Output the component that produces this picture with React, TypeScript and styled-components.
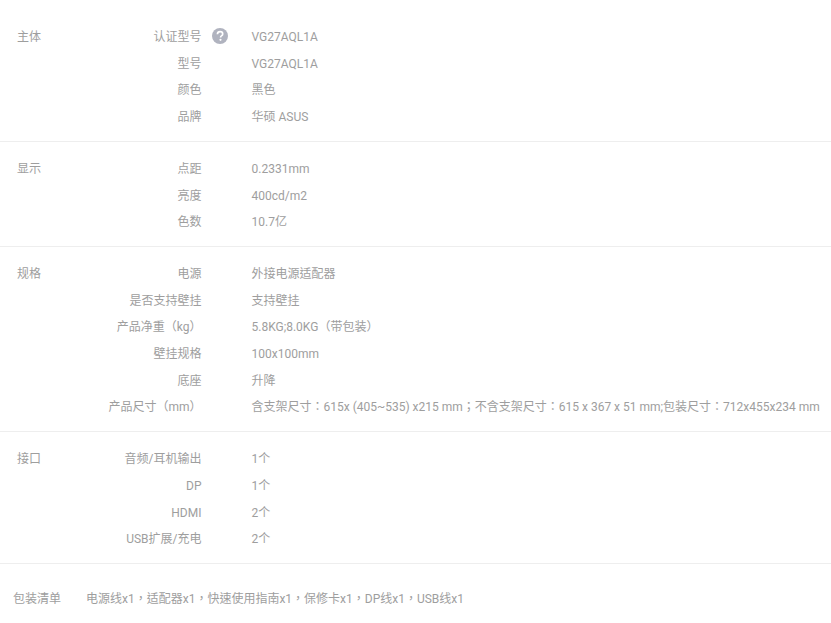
import React from 'react';
import styled, { createGlobalStyle } from 'styled-components';

const GlobalStyle = createGlobalStyle`
  html, body {
    margin: 0;
    padding: 0;
    background: #fff;
  }
`;

const Page = styled.div`
  width: 831px;
  padding-top: 10px;
  font-family: Roboto, "Noto Sans CJK TC", sans-serif;
  font-size: 12px;
  color: #9e9e9e;
  overflow: hidden;
`;

const Section = styled.section`
  display: flex;
  padding: 12.1px 0;
  border-bottom: 1px solid #eee;
`;

const SectionTitle = styled.div`
  width: 17px;
  flex: none;
  padding-left: 17px;
  white-space: nowrap;
  line-height: 30px;
`;

const Rows = styled.div`
  flex: 1;
  min-width: 0;
`;

const Row = styled.div`
  display: flex;
  height: 26.67px;
  line-height: 30px;
`;

const Label = styled.div`
  width: 167.5px;
  flex: none;
  text-align: right;
  white-space: nowrap;
`;

const Value = styled.div`
  margin-left: 50px;
  white-space: nowrap;
`;

const LabelWrap = styled.div`
  position: relative;
`;

const Help = styled.svg`
  position: absolute;
  left: 177.5px;
  top: 6px;
  width: 16px;
  height: 16px;
`;

const Packing = styled.div`
  display: flex;
  padding: 22px 0 0 13px;
  line-height: 26.67px;
  white-space: nowrap;
`;

const PackingLabel = styled.div`
  width: 73px;
  flex: none;
`;

type Spec = { label: string; value: string; help?: boolean };
type Group = { title: string; rows: Spec[] };

const groups: Group[] = [
  {
    title: '主体',
    rows: [
      { label: '认证型号', value: 'VG27AQL1A', help: true },
      { label: '型号', value: 'VG27AQL1A' },
      { label: '颜色', value: '黑色' },
      { label: '品牌', value: '华硕 ASUS' },
    ],
  },
  {
    title: '显示',
    rows: [
      { label: '点距', value: '0.2331mm' },
      { label: '亮度', value: '400cd/m2' },
      { label: '色数', value: '10.7亿' },
    ],
  },
  {
    title: '规格',
    rows: [
      { label: '电源', value: '外接电源适配器' },
      { label: '是否支持壁挂', value: '支持壁挂' },
      { label: '产品净重（kg）', value: '5.8KG;8.0KG（带包装）' },
      { label: '壁挂规格', value: '100x100mm' },
      { label: '底座', value: '升降' },
      {
        label: '产品尺寸（mm）',
        value: '含支架尺寸：615x (405~535) x215 mm；不含支架尺寸：615 x 367 x 51 mm;包装尺寸：712x455x234 mm',
      },
    ],
  },
  {
    title: '接口',
    rows: [
      { label: '音频/耳机输出', value: '1个' },
      { label: 'DP', value: '1个' },
      { label: 'HDMI', value: '2个' },
      { label: 'USB扩展/充电', value: '2个' },
    ],
  },
];

function HelpIcon() {
  return (
    <Help viewBox="0 0 16 16">
      <circle cx="8" cy="8" r="8" fill="#b0b3bf" />
      <path
        d="M5.4 6.2C5.5 4.6 6.6 3.7 8.1 3.7c1.6 0 2.6.9 2.6 2.2 0 1-.6 1.5-1.3 2-.6.4-.8.7-.8 1.5"
        fill="none"
        stroke="#fff"
        strokeWidth="1.7"
      />
      <circle cx="8.5" cy="11.8" r="1.1" fill="#fff" />
    </Help>
  );
}

export default function App() {
  return (
    <Page>
      <GlobalStyle />
      {groups.map((group) => (
        <Section key={group.title}>
          <SectionTitle>{group.title}</SectionTitle>
          <Rows>
            {group.rows.map((row) => (
              <Row key={row.label}>
                <LabelWrap>
                  <Label>{row.label}</Label>
                  {row.help && <HelpIcon />}
                </LabelWrap>
                <Value>{row.value}</Value>
              </Row>
            ))}
          </Rows>
        </Section>
      ))}
      <Packing>
        <PackingLabel>包装清单</PackingLabel>
        <div>电源线x1，适配器x1，快速使用指南x1，保修卡x1，DP线x1，USB线x1</div>
      </Packing>
    </Page>
  );
}
